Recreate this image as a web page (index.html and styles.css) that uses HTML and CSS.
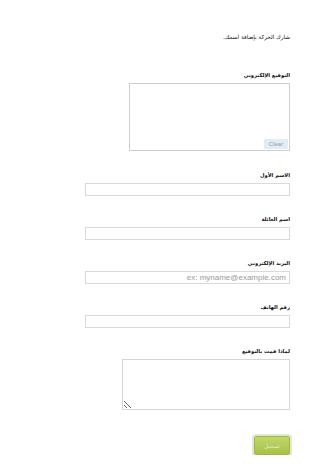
FILE: index.html
```html
<!DOCTYPE html>
<html lang="ar" dir="rtl">
<head>
  <meta charset="utf-8">
  <title>التوقيع</title>
  <link rel="stylesheet" href="styles.css">
</head>
<body>
  <form class="petition">
    <p class="intro">شارك الحركة بإضافة اسمك.</p>

    <div class="field">
      <label class="label">التوقيع الإلكتروني</label>
      <div class="sign">
        <button type="button" class="clear">Clear</button>
      </div>
    </div>

    <div class="field">
      <label class="label">الاسم الأول</label>
      <input type="text" class="text">
    </div>

    <div class="field">
      <label class="label">اسم العائلة</label>
      <input type="text" class="text">
    </div>

    <div class="field">
      <label class="label">البريد الإلكتروني</label>
      <input type="text" class="text" placeholder="ex: myname@example.com">
    </div>

    <div class="field">
      <label class="label">رقم الهاتف</label>
      <input type="text" class="text">
    </div>

    <div class="field">
      <label class="label">لماذا قمت بالتوقيع</label>
      <textarea class="why"></textarea>
    </div>

    <div class="submit-row">
      <button type="submit" class="submit">تسجيل</button>
    </div>
  </form>
</body>
</html>
```

FILE: styles.css
```css
body {margin: 0;
      background-color: #ffffff;
      font-family: "DejaVu Sans", sans-serif;
      color: #111111;}

.petition {padding: 33px 20px 0 20px;}

.intro {margin: 0 0 30px 0;
        font-size: 5.7px;
        line-height: 8px;}

.field {display: flex;
        flex-direction: column;
        align-items: flex-start;
        margin-bottom: 19px;}

.label {font-size: 5.2px;
        font-weight: bold;
        line-height: 8px;
        margin-bottom: 4px;}

.sign {position: relative;
       width: 159px;
       height: 66px;
       border: solid #cfcfcf 1px;
       margin-bottom: 1px;}

.clear {position: absolute;
        right: 1px;
        bottom: 1px;
        width: 24px;
        height: 10px;
        padding: 0;
        border: none;
        background-color: #e3ebf6;
        color: #9a9a9a;
        font-family: "Liberation Sans", sans-serif;
        font-size: 6px;}

.text {box-sizing: border-box;
       width: 205px;
       height: 13px;
       margin: 0;
       padding: 0 3px;
       border: solid #d9d9d9 1px;
       font-family: "Liberation Sans", sans-serif;
       font-size: 8px;}

.text::placeholder {color: #9b9b9b;}

.why {box-sizing: border-box;
      width: 168px;
      height: 51px;
      margin: 0;
      border: solid #d6d6d6 1px;
      resize: both;}

.submit-row {display: flex;
             padding-top: 7px;}

.submit {width: 36px;
         height: 19px;
         padding: 0;
         border: solid #9cb84a 1px;
         border-radius: 2px;
         background: linear-gradient(#c2d76c, #a6c148);
         box-shadow: 0 0 0 2px #e2e8d2;
         color: #e8f0c8;
         font-family: "DejaVu Sans", sans-serif;
         font-size: 5.5px;}
```
